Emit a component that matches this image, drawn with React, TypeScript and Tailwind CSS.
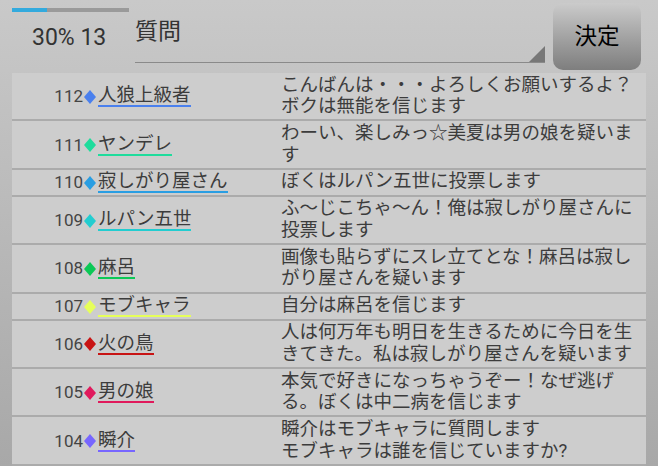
const rows = [
  { no: 112, name: "人狼上級者", color: "#4a80ee", msg: "こんばんは・・・よろしくお願いするよ？ボクは無能を信じます" },
  { no: 111, name: "ヤンデレ", color: "#1fdc9c", msg: "わーい、楽しみっ☆美夏は男の娘を疑います" },
  { no: 110, name: "寂しがり屋さん", color: "#2a9ee2", msg: "ぼくはルパン五世に投票します" },
  { no: 109, name: "ルパン五世", color: "#22cdd0", msg: "ふ～じこちゃ～ん！俺は寂しがり屋さんに投票します" },
  { no: 108, name: "麻呂", color: "#0cc856", msg: "画像も貼らずにスレ立てとな！麻呂は寂しがり屋さんを疑います" },
  { no: 107, name: "モブキャラ", color: "#e6ff5a", msg: "自分は麻呂を信じます" },
  { no: 106, name: "火の鳥", color: "#c81414", msg: "人は何万年も明日を生きるために今日を生きてきた。私は寂しがり屋さんを疑います" },
  { no: 105, name: "男の娘", color: "#e01a5c", msg: "本気で好きになっちゃうぞー！なぜ逃げる。ぼくは中二病を信じます" },
  { no: 104, name: "瞬介", color: "#7766ff", msg: "瞬介はモブキャラに質問します\nモブキャラは誰を信じていますか?" },
];

function Row({ no, name, color, msg }: { no: number; name: string; color: string; msg: string }) {
  return (
    <div className="flex items-center border-b-2 border-[#ababab] py-[1.5px]">
      <div className="w-[269px] flex items-center">
        <span className="w-[71px] text-right text-[17px] leading-[20px] text-[#444]">{no}</span>
        <svg width="12" height="14" viewBox="0 0 12 14" className="ml-[1px] mt-[1px]">
          <polygon points="6,0 12,7 6,14 0,7" fill={color} />
        </svg>
        <span
          className="ml-[2px] inline-block border-b-2 text-[18.5px] leading-[20px] text-[#3c3c3c]"
          style={{ borderColor: color }}
        >
          {name}
        </span>
      </div>
      <div className="w-[363px] whitespace-pre-line text-[18.5px] leading-[21.7px] text-[#3c3c3c]">{msg}</div>
    </div>
  );
}

export default function App() {
  return (
    <div
      className="w-[658px] h-[466px] overflow-hidden bg-gradient-to-b from-[#c9c9c9] to-[#a8a8a8]"
      style={{ fontFamily: '"Roboto", "Noto Sans CJK JP", sans-serif' }}
    >
      {/* top bar */}
      <div className="flex h-[73px]">
        <div className="w-[135px] pl-3 pt-2">
          <div className="w-[117px] h-1 bg-[#9a9a9a]">
            <div className="w-[30%] h-full bg-[#33aadd]" />
          </div>
          <div className="pl-5 mt-3 text-[23px] leading-[27px] text-[#333]">30% 13</div>
        </div>
        <div className="relative w-[410px] h-[63px] border-b-[1.5px] border-[#8a8a8a]">
          <div className="pt-[17px] text-[23px] leading-[30px] text-[#333]">質問</div>
          <svg width="16" height="16" viewBox="0 0 16 16" className="absolute right-0 bottom-0">
            <polygon points="16,0 16,16 0,16" fill="#777" />
          </svg>
        </div>
        <div className="ml-2 mt-[3px] w-[88px] h-[67px] rounded-[10px] bg-gradient-to-b from-[#cbcbcb] to-[#7e7e7e] flex items-center justify-center text-[22.5px] text-black">
          決定
        </div>
      </div>

      {/* log list */}
      <div className="mx-3 bg-[#cdcdcd]">
        {rows.map((r) => (
          <Row key={r.no} {...r} />
        ))}
      </div>
    </div>
  );
}
